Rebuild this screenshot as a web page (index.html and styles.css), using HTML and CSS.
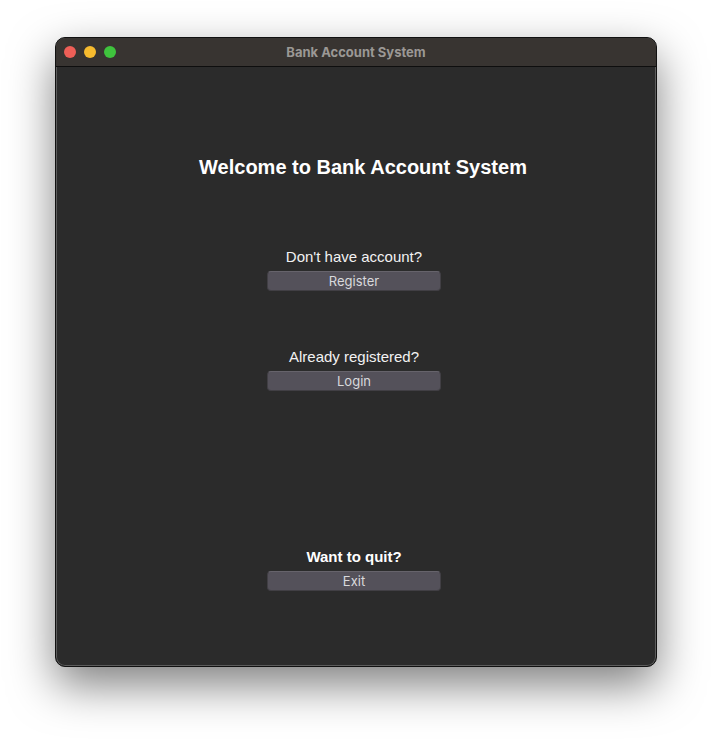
FILE: index.html
```html
<!DOCTYPE html>
<html lang="en">
<head>
    <meta charset="UTF-8">
    <meta name="viewport" content="width=device-width, initial-scale=1.0">
    <title>Bank Account System</title>
    <link rel="stylesheet" href="styles.css">
</head>
<body>
    <div class="window">
        <div class="titlebar">
            <div class="lights">
                <span class="light red"></span>
                <span class="light yellow"></span>
                <span class="light green"></span>
            </div>
            <div class="title">Bank Account System</div>
        </div>

        <div class="content">
            <h1 class="heading">Welcome to Bank Account System</h1>

            <div class="section first">
                <div class="label">Don't have account?</div>
                <button class="btn">Register</button>
            </div>

            <div class="section second">
                <div class="label">Already registered?</div>
                <button class="btn">Login</button>
            </div>

            <div class="section third">
                <div class="label bold">Want to quit?</div>
                <button class="btn">Exit</button>
            </div>
        </div>
    </div>
</body>
</html>
```

FILE: styles.css
```css
html {
    background: #ffffff;
}
body {
    margin: 0;
    min-height: 740px;
    background: #ffffff;
    font-family: "Liberation Sans", Arial, sans-serif;
}
.window {
    margin: 37px 0 0 55px;
    width: 600px;
    height: 628px;
    background: #2b2b2b;
    border: 1px solid #111;
    border-radius: 10px;
    box-shadow: inset 0 0 0 1px #5c5c5c, 0 18px 45px rgba(0,0,0,0.5);
    overflow: hidden;
    display: flex;
    flex-direction: column;
}
.titlebar {
    position: relative;
    height: 28px;
    background: #383431;
    border-bottom: 1px solid #0e0e0e;
    display: flex;
    align-items: center;
    justify-content: center;
}
.lights {
    position: absolute;
    left: 8px;
    top: 8px;
    display: flex;
    gap: 8px;
}
.light {
    width: 12px;
    height: 12px;
    border-radius: 50%;
}
.red { background: #ee5f57; }
.yellow { background: #f7bb2e; }
.green { background: #3fc33d; }
.title {
    font-family: Inter, "Noto Sans", sans-serif;
    font-weight: 700;
    font-size: 13px;
    color: #9b9895;
}
.content {
    padding-right: 4px;
    display: flex;
    flex-direction: column;
    align-items: center;
}
.heading {
    margin: 88px 0 0 18px;
    font-size: 20px;
    line-height: 24px;
    font-weight: 700;
    color: #ffffff;
}
.section {
    display: flex;
    flex-direction: column;
    align-items: center;
}
.first { margin-top: 69px; }
.second { margin-top: 57px; }
.third { margin-top: 157px; }
.label {
    font-size: 15px;
    line-height: 18px;
    color: #f2f2f2;
}
.label.bold {
    font-weight: 700;
    color: #ffffff;
}
.btn {
    margin-top: 5px;
    width: 174px;
    height: 20px;
    padding: 0;
    background: #54515a;
    border: 1px solid #413f44;
    border-top-color: #66636b;
    border-radius: 4px;
    color: #d9d9dc;
    font-family: Inter, "Noto Sans", sans-serif;
    font-size: 13px;
    line-height: 19px;
}
```
